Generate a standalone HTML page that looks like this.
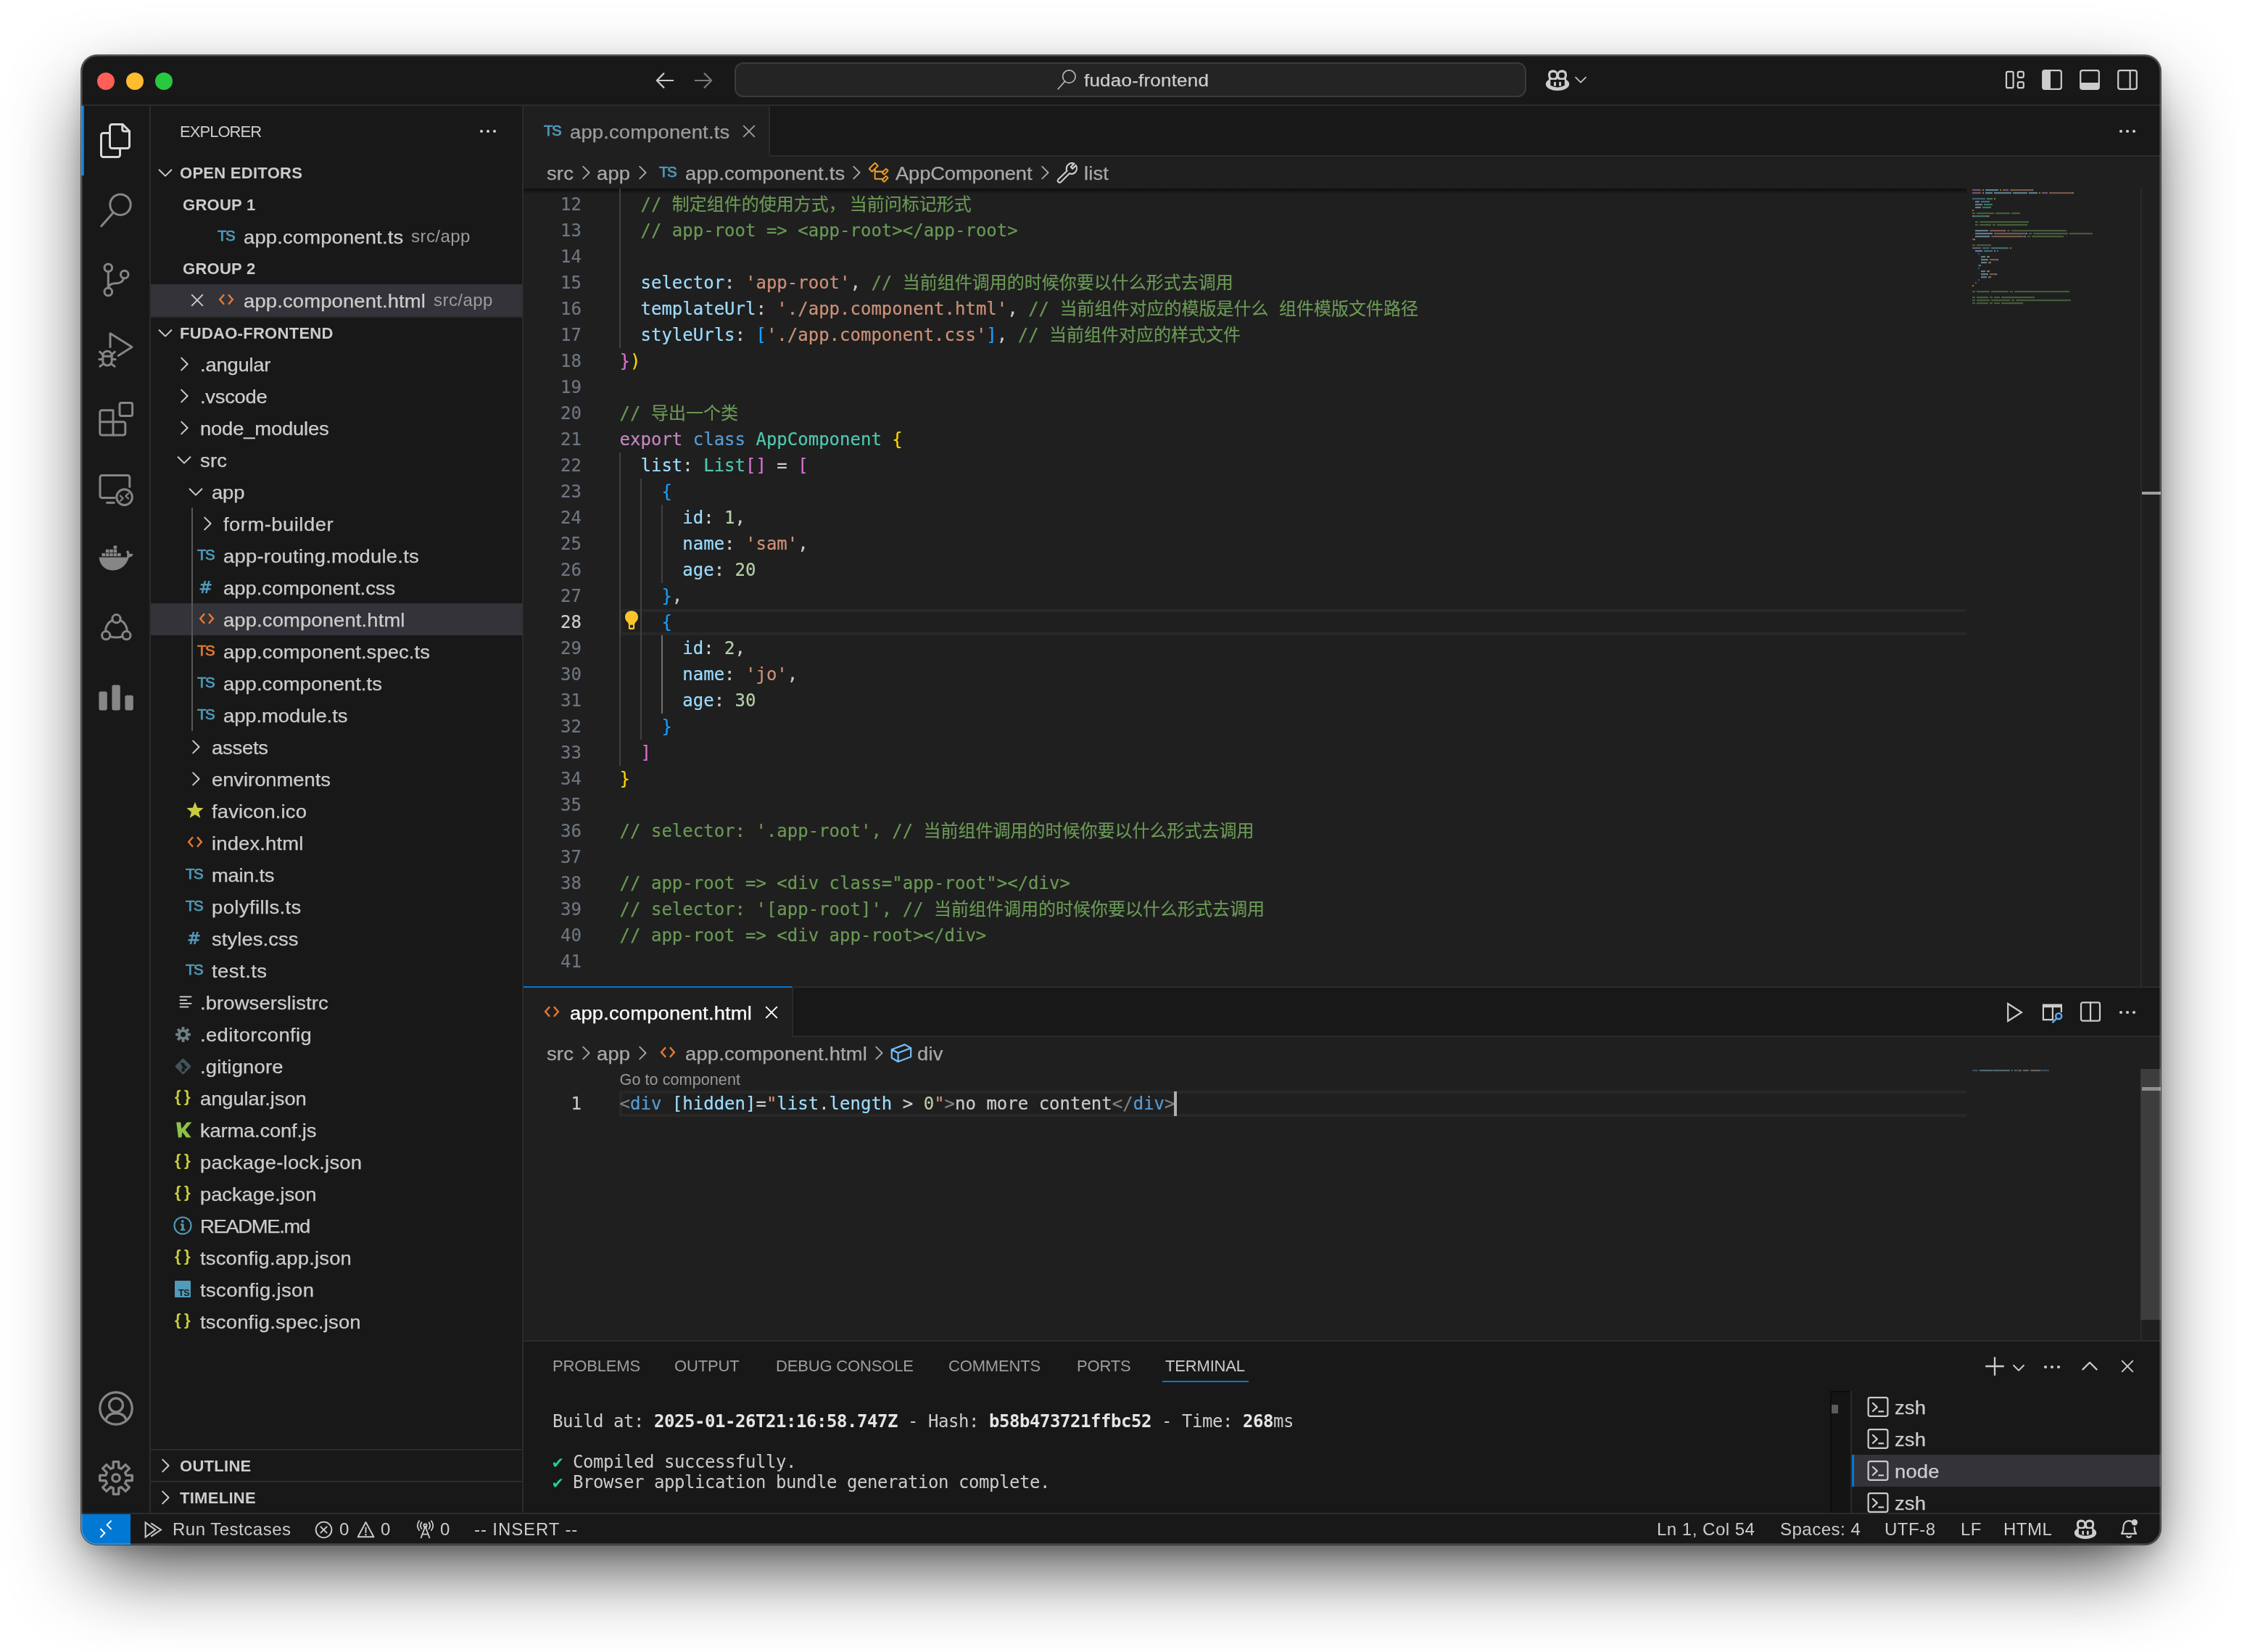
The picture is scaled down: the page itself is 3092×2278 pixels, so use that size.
<!DOCTYPE html><html lang="zh"><head><meta charset="utf-8"><title>fudao-frontend</title><style>
*{box-sizing:border-box;margin:0;padding:0}
html,body{width:3092px;height:2278px;background:#fff;overflow:hidden}
body{font-family:"Liberation Sans","Noto Sans CJK SC",sans-serif;color:#ccc;position:relative;-webkit-font-smoothing:antialiased}
.abs{position:absolute}
#win{position:absolute;left:112px;top:76px;width:2868px;height:2054px;border-radius:22px;background:#181818;overflow:hidden;}
#shadow{position:absolute;left:112px;top:76px;width:2868px;height:2054px;border-radius:22px;box-shadow:0 0 0 1px rgba(0,0,0,.62),0 43px 108px -17px rgba(0,0,0,.78),0 10px 22px rgba(0,0,0,.12)}
#rim{position:absolute;left:0;top:0;width:2868px;height:2054px;border-radius:22px;box-shadow:inset 0 0 0 1.5px rgba(255,255,255,.27);pointer-events:none;z-index:50}
.t{position:absolute;white-space:pre;line-height:44px;height:44px}
.ui{font-size:25.6px;transform:scaleX(1.07);transform-origin:0 50%;letter-spacing:.15px;line-height:46px;-webkit-text-stroke:.25px}
.b{font-weight:700}
.hl{position:absolute;background:#333339}
.ln{position:absolute;background:#2b2b2b}
.code{font-family:"DejaVu Sans Mono","Liberation Mono","Noto Sans CJK SC",monospace;font-size:24px;letter-spacing:0;white-space:pre;position:absolute;height:36px;line-height:37px;color:#ccc;-webkit-text-stroke:.2px}
.num{font-family:"DejaVu Sans Mono","Liberation Mono",monospace;font-size:24px;position:absolute;height:36px;line-height:37px;color:#6e7681;-webkit-text-stroke:.2px;text-align:right;width:81px}
.cm{color:#6a9955}.kc{color:#c586c0}.kw{color:#569cd6}.cl{color:#4ec9b0}.pr{color:#9cdcfe}.st{color:#ce9178}.nu{color:#b5cea8}
.b1{color:#ffd700}.b2{color:#da70d6}.b3{color:#179fff}.pu{color:#ccc}.tg{color:#808080}
.sp{letter-spacing:5px}.cj{font-family:"Noto Sans CJK SC",sans-serif;letter-spacing:0}
svg{position:absolute;overflow:visible}
</style></head><body>
<div id="shadow"></div>
<div id="win"><div class="abs" style="left:-112px;top:-76px;width:3092px;height:2278px;will-change:transform">
<!-- parts_title -->
<div class="abs" style="left:112px;top:76px;width:2868px;height:70px;background:#181818;"></div>
<div class="abs" style="left:112px;top:144px;width:2868px;height:2px;background:#2b2b2b;"></div>
<div class="abs" style="left:134px;top:100px;width:24px;height:24px;border-radius:50%;background:#ff5f57"></div>
<div class="abs" style="left:174px;top:100px;width:24px;height:24px;border-radius:50%;background:#febc2e"></div>
<div class="abs" style="left:214px;top:100px;width:24px;height:24px;border-radius:50%;background:#28c840"></div>
<svg style="left:901.0px;top:95.0px" width="32" height="32" viewBox="0 0 16 16" ><g fill="none" stroke="#ccc" stroke-width="1.1" stroke-linecap="round" stroke-linejoin="round"><path d="M13.6 8 H2.6 M7.2 3.2 L2.4 8 L7.2 12.8"/></g></svg>
<svg style="left:954.0px;top:95.0px" width="32" height="32" viewBox="0 0 16 16" ><g fill="none" stroke="#7a7a7a" stroke-width="1.1" stroke-linecap="round" stroke-linejoin="round"><path d="M2.4 8 H13.4 M8.8 3.2 L13.6 8 L8.8 12.8"/></g></svg>
<div class="abs" style="left:1013px;top:86px;width:1092px;height:48px;border-radius:12px;background:#242424;border:2px solid #3b3b3b"></div>
<svg style="left:1455.0px;top:95.0px" width="32" height="32" viewBox="0 0 16 16" ><g fill="none" stroke="#b8b8b8" stroke-width="0.85" stroke-linecap="round" stroke-linejoin="round"><circle cx="9.7" cy="5.3" r="4.35"/><path d="M6.8 8.6 L2.1 13.9"/></g></svg>
<div class="t ui" style="left:1495px;top:88px;font-size:24.3px;letter-spacing:.2px;color:#ccc">fudao-frontend</div>
<svg style="left:2132.0px;top:95.0px" width="32" height="32" viewBox="0 0 16 16" ><g fill="#ccc"><rect x="1.55" y=".75" width="6.65" height="6.9" rx="2.9"/><rect x="7.8" y=".75" width="6.65" height="6.9" rx="2.9"/><ellipse cx="8" cy="10.5" rx="8.1" ry="4.55"/><rect x="2" y="4" width="12" height="6"/></g><g fill="#181818"><rect x="3.15" y="2.55" width="3.85" height="3.7" rx="1.6"/><rect x="9.05" y="2.55" width="3.85" height="3.7" rx="1.6"/><path d="M3.15 7.45 H7.2 L8 6.8 L8.8 7.45 H12.9 V11.4 Q8 14 3.15 11.4z"/></g><g fill="#ccc"><rect x="5.5" y="8.9" width="1.45" height="3.1" rx=".7"/><rect x="9.05" y="8.9" width="1.45" height="3.1" rx=".7"/></g></svg>
<svg style="left:2164.0px;top:94.0px" width="32" height="32" viewBox="0 0 16 16" ><g fill="none" stroke="#ccc" stroke-width="0.8" stroke-linecap="round" stroke-linejoin="round"><path d="M4.5 6.3 L8 9.8 L11.5 6.3"/></g></svg>
<svg style="left:2763.0px;top:94.0px" width="32" height="32" viewBox="0 0 16 16" ><g fill="none" stroke="#ccc" stroke-width="1.1" stroke-linecap="round" stroke-linejoin="round"><rect x="2" y="2.4" width="4.8" height="11.2" rx="1"/><rect x="9.9" y="2.4" width="4" height="4" rx="1"/><rect x="9.9" y="9.6" width="4" height="4" rx="1"/></g></svg>
<svg style="left:2814.0px;top:94.0px" width="32" height="32" viewBox="0 0 16 16" ><g fill="none" stroke="#ccc" stroke-width="1.1" stroke-linecap="round" stroke-linejoin="round"><rect x="1.6" y="1.6" width="12.8" height="12.8" rx="1.4"/></g><path fill="#ccc" d="M3 1.6 H7 V14.4 H3 A1.4 1.4 0 0 1 1.6 13 V3 A1.4 1.4 0 0 1 3 1.6z"/></svg>
<svg style="left:2866.0px;top:94.0px" width="32" height="32" viewBox="0 0 16 16" ><g fill="none" stroke="#ccc" stroke-width="1.1" stroke-linecap="round" stroke-linejoin="round"><rect x="1.6" y="1.6" width="12.8" height="12.8" rx="1.4"/></g><path fill="#ccc" d="M1.6 10 H14.4 V13 A1.4 1.4 0 0 1 13 14.4 H3 A1.4 1.4 0 0 1 1.6 13z"/></svg>
<svg style="left:2918.0px;top:94.0px" width="32" height="32" viewBox="0 0 16 16" ><g fill="none" stroke="#ccc" stroke-width="1.1" stroke-linecap="round" stroke-linejoin="round"><rect x="1.6" y="1.6" width="12.8" height="12.8" rx="1.4"/><path d="M9.8 1.6 V14.4"/></g></svg>
<!-- parts_activity -->
<div class="abs" style="left:112px;top:146px;width:96px;height:1940px;background:#181818;"></div>
<div class="abs" style="left:206px;top:146px;width:2px;height:1940px;background:#2b2b2b;"></div>
<div class="abs" style="left:112px;top:146px;width:4px;height:96px;background:#0078d4;"></div>
<svg style="left:136.0px;top:170.0px" width="48" height="48" viewBox="0 0 24 24" ><g fill="none" stroke="#d7d7d7" stroke-width="1.5" stroke-linecap="round" stroke-linejoin="round"><path d="M9.25 .75 H16.6 L21.25 5.4 V15.75 a1.5 1.5 0 0 1 -1.5 1.5 H9.25 a1.5 1.5 0 0 1 -1.5 -1.5 V2.25 a1.5 1.5 0 0 1 1.5 -1.5z"/><path d="M16.4 .9 V4.2 a1.3 1.3 0 0 0 1.3 1.3 H21"/><path d="M7.75 6.75 H3.25 a1.5 1.5 0 0 0 -1.5 1.5 V21.75 a1.5 1.5 0 0 0 1.5 1.5 H13.25 a1.5 1.5 0 0 0 1.5 -1.5 V17.25"/></g></svg>
<svg style="left:136.0px;top:266.0px" width="48" height="48" viewBox="0 0 24 24" ><g fill="none" stroke="#868686" stroke-width="1.5" stroke-linecap="round" stroke-linejoin="round"><circle cx="15" cy="8.1" r="7.1"/><path d="M10.2 13.5 L1.9 22.9"/></g></svg>
<svg style="left:136.0px;top:362.0px" width="48" height="48" viewBox="0 0 24 24" ><g fill="none" stroke="#868686" stroke-width="1.5" stroke-linecap="round" stroke-linejoin="round"><circle cx="6.65" cy="3.6" r="2.65"/><circle cx="17.85" cy="8.25" r="2.65"/><circle cx="6.65" cy="20.2" r="2.65"/><path d="M6.65 6.3 V17.5"/><path d="M17.3 10.9 C16.6 13.6 14.6 14.4 11.5 14.4 C9 14.4 7.2 15.4 6.65 17.4"/></g></svg>
<svg style="left:136.0px;top:458.0px" width="48" height="48" viewBox="0 0 24 24" ><g fill="none" stroke="#868686" stroke-width="1.5" stroke-linecap="round" stroke-linejoin="round"><path d="M8 10.2 V.9 L23 10.2 L13.6 16.2"/><path d="M2.9 19.9 v-3.7 a3.1 3.1 0 0 1 6.2 0 v3.7 a3.1 3.1 0 0 1 -6.2 0z"/><path d="M3 16.6 h6"/><path d="M3 15.6 L.8 13.6 M9 15.6 L11.2 13.6 M2.9 18.7 H.4 M9.1 18.7 H11.6 M3.4 21.8 L.9 23.6 M8.6 21.8 L11.1 23.6"/></g></svg>
<svg style="left:136.0px;top:554.0px" width="48" height="48" viewBox="0 0 24 24" ><g fill="none" stroke="#868686" stroke-width="1.5" stroke-linecap="round" stroke-linejoin="round"><rect x="14.5" y=".75" width="8.8" height="9" rx="1.2"/><path d="M10 5.9 H2.3 a1.4 1.4 0 0 0 -1.4 1.4 V21.6 a1.4 1.4 0 0 0 1.4 1.4 H17 a1.4 1.4 0 0 0 1.4 -1.4 V15.3 a1.4 1.4 0 0 0 -1.4 -1.4 H10 V5.9z"/><path d="M10 13.9 V23 M.9 13.9 H10"/></g></svg>
<svg style="left:136.0px;top:650.0px" width="48" height="48" viewBox="0 0 24 24" ><g fill="none" stroke="#868686" stroke-width="1.5" stroke-linecap="round" stroke-linejoin="round"><path d="M11 18.3 H2.4 a1.4 1.4 0 0 1 -1.4 -1.4 V4.2 a1.4 1.4 0 0 1 1.4 -1.4 H20 a1.4 1.4 0 0 1 1.4 1.4 V10.6"/><path d="M5.8 21.6 H10.6"/><circle cx="17.8" cy="17.8" r="5.4"/></g><g fill="none" stroke="#868686" stroke-width="1.1" stroke-linecap="round" stroke-linejoin="round"><path d="M14.9 16.8 L16.9 18.6 L14.9 20.4 M20.6 15.2 L18.6 17 L20.6 18.8"/></g></svg>
<svg style="left:136.0px;top:746.0px" width="48" height="48" viewBox="0 0 24 24" ><g fill="#868686"><path d="M.3 11.2 H19.4 C19.9 9.6 19.6 8.3 19 7.4 C19.6 6.9 20 6.6 20.3 6.4 C21 7.3 21.3 8.1 21.2 9 C22.2 8.6 23.2 8.8 23.9 9.3 C23.4 10.5 22.3 11.2 20.9 11.3 C19.2 16.9 15.4 20.2 10.1 20.2 C4.3 20.2 .8 16.6 .3 11.2z"/><rect x="2.2" y="8.4" width="2.3" height="2.2"/><rect x="4.9" y="8.4" width="2.3" height="2.2"/><rect x="7.6" y="8.4" width="2.3" height="2.2"/><rect x="10.3" y="8.4" width="2.3" height="2.2"/><rect x="13" y="8.4" width="2.3" height="2.2"/><rect x="4.9" y="5.8" width="2.3" height="2.2"/><rect x="7.6" y="5.8" width="2.3" height="2.2"/><rect x="10.3" y="5.8" width="2.3" height="2.2"/><rect x="10.3" y="3.2" width="2.3" height="2.2"/></g></svg>
<svg style="left:136.0px;top:842.0px" width="48" height="48" viewBox="0 0 24 24" ><g fill="none" stroke="#868686" stroke-width="1.5" stroke-linecap="round" stroke-linejoin="round"><circle cx="12.25" cy="5.6" r="2.8"/><circle cx="5.1" cy="17.1" r="2.8"/><circle cx="19.2" cy="17.1" r="2.8"/><path d="M9.6 6.6 C6.8 8 4.9 10.8 4.7 14.2"/><path d="M14.9 6.6 C17.7 8 19.5 10.8 19.7 14.2"/><path d="M8 17.9 C10.6 18.7 13.8 18.7 16.4 17.9"/></g></svg>
<svg style="left:136.0px;top:938.0px" width="48" height="48" viewBox="0 0 24 24" ><g fill="#868686"><rect x=".2" y="7.7" width="5.7" height="13" rx="1.3"/><rect x="9.2" y="3.2" width="5.7" height="17.5" rx="1.3"/><rect x="18.2" y="10.4" width="5.7" height="10.3" rx="1.3"/></g></svg>
<svg style="left:136.0px;top:1918.0px" width="48" height="48" viewBox="0 0 24 24" ><g fill="none" stroke="#868686" stroke-width="1.6" stroke-linecap="round" stroke-linejoin="round"><circle cx="12" cy="12" r="11.1"/><circle cx="12" cy="9.8" r="4.7"/><path d="M4.9 20.4 C5.6 17 8.4 15.4 12 15.4 C15.6 15.4 18.4 17 19.1 20.4"/></g></svg>
<svg style="left:136.0px;top:2014.0px" width="48" height="48" viewBox="0 0 24 24" ><g fill="none" stroke="#868686" stroke-width="1.65" stroke-linecap="round" stroke-linejoin="round"><path d="M10.13 4.94 L10.14 0.85 L13.86 0.85 L13.87 4.94 L15.67 5.69 L18.57 2.81 L21.19 5.43 L18.31 8.33 L19.06 10.13 L23.15 10.14 L23.15 13.86 L19.06 13.87 L18.31 15.67 L21.19 18.57 L18.57 21.19 L15.67 18.31 L13.87 19.06 L13.86 23.15 L10.14 23.15 L10.13 19.06 L8.33 18.31 L5.43 21.19 L2.81 18.57 L5.69 15.67 L4.94 13.87 L0.85 13.86 L0.85 10.14 L4.94 10.13 L5.69 8.33 L2.81 5.43 L5.43 2.81 L8.33 5.69Z"/><circle cx="12" cy="12" r="2.6"/></g></svg>
<!-- parts_sidebar -->
<div class="abs" style="left:208px;top:146px;width:514px;height:1940px;background:#181818;"></div>
<div class="abs" style="left:720px;top:146px;width:2px;height:1940px;background:#2b2b2b;"></div>
<div class="t " style="left:248px;top:160px;font-size:22px;letter-spacing:-.95px;color:#ccc">EXPLORER</div>
<svg style="left:657.0px;top:165.0px" width="32" height="32" viewBox="0 0 16 16" ><g fill="#ccc"><circle cx="3.5" cy="8" r="1.05"/><circle cx="8" cy="8" r="1.05"/><circle cx="12.5" cy="8" r="1.05"/></g></svg>
<svg style="left:212.0px;top:222.0px" width="32" height="32" viewBox="0 0 16 16" ><g fill="none" stroke="#ccc" stroke-width="0.9900000000000001" stroke-linecap="round" stroke-linejoin="round"><path d="M3.8 6.1 L8 10.3 L12.2 6.1"/></g></svg>
<div class="t b" style="left:248px;top:216px;font-size:22px;letter-spacing:.28px;margin-top:1px">OPEN EDITORS</div>
<div class="t b" style="left:252px;top:260px;font-size:22px;letter-spacing:.28px;margin-top:1px">GROUP 1</div>
<div class="t" style="left:300px;top:303px;font-size:20.5px;font-weight:400;-webkit-text-stroke:.75px;letter-spacing:-1.4px;color:#519aba">TS</div>
<div class="t ui" style="left:336px;top:304px;">app.component.ts</div>
<div class="t " style="left:567px;top:304px;font-size:24px;letter-spacing:.45px;color:#9d9d9d">src/app</div>
<div class="t b" style="left:252px;top:348px;font-size:22px;letter-spacing:.28px;margin-top:1px">GROUP 2</div>
<div class="abs" style="left:208px;top:392px;width:512px;height:44px;background:#333339;"></div>
<svg style="left:256.0px;top:398.0px" width="32" height="32" viewBox="0 0 16 16" ><g fill="none" stroke="#ccc" stroke-width="0.95" stroke-linecap="butt" stroke-linejoin="round"><path d="M4.1 4.1 L11.9 11.9 M11.9 4.1 L4.1 11.9"/></g></svg>
<svg style="left:295.5px;top:397.0px" width="32" height="32" viewBox="0 0 32 32" ><g fill="none" stroke="#e37933" stroke-width="2.5" stroke-linecap="butt" stroke-linejoin="miter"><path d="M13 9.2 L7.2 16 L13 22.8 M19 9.2 L24.8 16 L19 22.8"/></g></svg>
<div class="t ui" style="left:336px;top:392px;">app.component.html</div>
<div class="t " style="left:598px;top:392px;font-size:24px;letter-spacing:.45px;color:#9d9d9d">src/app</div>
<div class="abs" style="left:208px;top:436px;width:512px;height:2px;background:#2b2b2b;"></div>
<svg style="left:212.0px;top:443.0px" width="32" height="32" viewBox="0 0 16 16" ><g fill="none" stroke="#ccc" stroke-width="0.9900000000000001" stroke-linecap="round" stroke-linejoin="round"><path d="M3.8 6.1 L8 10.3 L12.2 6.1"/></g></svg>
<div class="t b" style="left:248px;top:437px;font-size:22px;letter-spacing:.28px;margin-top:1px">FUDAO-FRONTEND</div>
<svg style="left:238.0px;top:486.0px" width="32" height="32" viewBox="0 0 16 16" ><g fill="none" stroke="#ccc" stroke-width="0.9900000000000001" stroke-linecap="round" stroke-linejoin="round"><path d="M6.1 3.8 L10.3 8 L6.1 12.2"/></g></svg>
<div class="t ui" style="left:276px;top:480px;letter-spacing:-0.207px">.angular</div>
<svg style="left:238.0px;top:530.0px" width="32" height="32" viewBox="0 0 16 16" ><g fill="none" stroke="#ccc" stroke-width="0.9900000000000001" stroke-linecap="round" stroke-linejoin="round"><path d="M6.1 3.8 L10.3 8 L6.1 12.2"/></g></svg>
<div class="t ui" style="left:276px;top:524px;letter-spacing:-0.25px">.vscode</div>
<svg style="left:238.0px;top:574.0px" width="32" height="32" viewBox="0 0 16 16" ><g fill="none" stroke="#ccc" stroke-width="0.9900000000000001" stroke-linecap="round" stroke-linejoin="round"><path d="M6.1 3.8 L10.3 8 L6.1 12.2"/></g></svg>
<div class="t ui" style="left:276px;top:568px;letter-spacing:-0.168px">node_modules</div>
<svg style="left:238.0px;top:618.0px" width="32" height="32" viewBox="0 0 16 16" ><g fill="none" stroke="#ccc" stroke-width="0.9900000000000001" stroke-linecap="round" stroke-linejoin="round"><path d="M3.8 6.1 L8 10.3 L12.2 6.1"/></g></svg>
<div class="t ui" style="left:276px;top:612px;letter-spacing:0.2px">src</div>
<svg style="left:254.0px;top:662.0px" width="32" height="32" viewBox="0 0 16 16" ><g fill="none" stroke="#ccc" stroke-width="0.9900000000000001" stroke-linecap="round" stroke-linejoin="round"><path d="M3.8 6.1 L8 10.3 L12.2 6.1"/></g></svg>
<div class="t ui" style="left:292px;top:656px;letter-spacing:-0.15px">app</div>
<svg style="left:270.0px;top:706.0px" width="32" height="32" viewBox="0 0 16 16" ><g fill="none" stroke="#ccc" stroke-width="0.9900000000000001" stroke-linecap="round" stroke-linejoin="round"><path d="M6.1 3.8 L10.3 8 L6.1 12.2"/></g></svg>
<div class="t ui" style="left:308px;top:700px;letter-spacing:0.459px">form-builder</div>
<div class="t" style="left:272px;top:743px;font-size:20.5px;font-weight:400;-webkit-text-stroke:.75px;letter-spacing:-1.4px;color:#519aba">TS</div>
<div class="t ui" style="left:308px;top:744px;letter-spacing:0.225px">app-routing.module.ts</div>
<div class="t" style="left:274px;top:788px;font-family:'DejaVu Sans',sans-serif;font-size:23px;font-weight:700;color:#519aba">#</div>
<div class="t ui" style="left:308px;top:788px;letter-spacing:-0.014px">app.component.css</div>
<div class="abs" style="left:208px;top:832px;width:512px;height:44px;background:#333339;"></div>
<svg style="left:268.5px;top:837.0px" width="32" height="32" viewBox="0 0 32 32" ><g fill="none" stroke="#e37933" stroke-width="2.5" stroke-linecap="butt" stroke-linejoin="miter"><path d="M13 9.2 L7.2 16 L13 22.8 M19 9.2 L24.8 16 L19 22.8"/></g></svg>
<div class="t ui" style="left:308px;top:832px;letter-spacing:0.127px">app.component.html</div>
<div class="t" style="left:272px;top:875px;font-size:20.5px;font-weight:400;-webkit-text-stroke:.75px;letter-spacing:-1.4px;color:#e37933">TS</div>
<div class="t ui" style="left:308px;top:876px;letter-spacing:0.08px">app.component.spec.ts</div>
<div class="t" style="left:272px;top:919px;font-size:20.5px;font-weight:400;-webkit-text-stroke:.75px;letter-spacing:-1.4px;color:#519aba">TS</div>
<div class="t ui" style="left:308px;top:920px;letter-spacing:0.076px">app.component.ts</div>
<div class="t" style="left:272px;top:963px;font-size:20.5px;font-weight:400;-webkit-text-stroke:.75px;letter-spacing:-1.4px;color:#519aba">TS</div>
<div class="t ui" style="left:308px;top:964px;letter-spacing:-0.05px">app.module.ts</div>
<svg style="left:254.0px;top:1014.0px" width="32" height="32" viewBox="0 0 16 16" ><g fill="none" stroke="#ccc" stroke-width="0.9900000000000001" stroke-linecap="round" stroke-linejoin="round"><path d="M6.1 3.8 L10.3 8 L6.1 12.2"/></g></svg>
<div class="t ui" style="left:292px;top:1008px;letter-spacing:-0.21px">assets</div>
<svg style="left:254.0px;top:1058.0px" width="32" height="32" viewBox="0 0 16 16" ><g fill="none" stroke="#ccc" stroke-width="0.9900000000000001" stroke-linecap="round" stroke-linejoin="round"><path d="M6.1 3.8 L10.3 8 L6.1 12.2"/></g></svg>
<div class="t ui" style="left:292px;top:1052px;letter-spacing:-0.041px">environments</div>
<svg style="left:256.0px;top:1104.0px" width="26" height="26" viewBox="0 0 16 16" ><polygon fill="#cbcb41" points="8.00,1.00 9.94,5.93 15.23,6.25 11.14,9.62 12.47,14.75 8.00,11.90 3.53,14.75 4.86,9.62 0.77,6.25 6.06,5.93"/></svg>
<div class="t ui" style="left:292px;top:1096px;letter-spacing:0.14px">favicon.ico</div>
<svg style="left:252.5px;top:1145.0px" width="32" height="32" viewBox="0 0 32 32" ><g fill="none" stroke="#e37933" stroke-width="2.5" stroke-linecap="butt" stroke-linejoin="miter"><path d="M13 9.2 L7.2 16 L13 22.8 M19 9.2 L24.8 16 L19 22.8"/></g></svg>
<div class="t ui" style="left:292px;top:1140px;letter-spacing:0.15px">index.html</div>
<div class="t" style="left:256px;top:1183px;font-size:20.5px;font-weight:400;-webkit-text-stroke:.75px;letter-spacing:-1.4px;color:#519aba">TS</div>
<div class="t ui" style="left:292px;top:1184px;letter-spacing:-0.267px">main.ts</div>
<div class="t" style="left:256px;top:1227px;font-size:20.5px;font-weight:400;-webkit-text-stroke:.75px;letter-spacing:-1.4px;color:#519aba">TS</div>
<div class="t ui" style="left:292px;top:1228px;letter-spacing:0.386px">polyfills.ts</div>
<div class="t" style="left:258px;top:1272px;font-family:'DejaVu Sans',sans-serif;font-size:23px;font-weight:700;color:#519aba">#</div>
<div class="t ui" style="left:292px;top:1272px;letter-spacing:0.072px">styles.css</div>
<div class="t" style="left:256px;top:1315px;font-size:20.5px;font-weight:400;-webkit-text-stroke:.75px;letter-spacing:-1.4px;color:#519aba">TS</div>
<div class="t ui" style="left:292px;top:1316px;letter-spacing:0.466px">test.ts</div>
<svg style="left:245.0px;top:1370.0px" width="22" height="22" viewBox="0 0 16 16" ><g fill="#d4d7d6"><rect x="2" y="2.6" width="12" height="1.3"/><rect x="2" y="6" width="7.4" height="1.3"/><rect x="2" y="9.4" width="12" height="1.3"/><rect x="2" y="12.8" width="9" height="1.3"/></g></svg>
<div class="t ui" style="left:276px;top:1360px;letter-spacing:0.114px">.browserslistrc</div>
<svg style="left:239.5px;top:1413.5px" width="25" height="25" viewBox="0 0 16 16" ><polygon fill="#6d8086" points="12.39,6.64 14.70,6.85 14.70,9.15 12.39,9.36 12.07,10.15 13.55,11.93 11.93,13.55 10.15,12.07 9.36,12.39 9.15,14.70 6.85,14.70 6.64,12.39 5.85,12.07 4.07,13.55 2.45,11.93 3.93,10.15 3.61,9.36 1.30,9.15 1.30,6.85 3.61,6.64 3.93,5.85 2.45,4.07 4.07,2.45 5.85,3.93 6.64,3.61 6.85,1.30 9.15,1.30 9.36,3.61 10.15,3.93 11.93,2.45 13.55,4.07 12.07,5.85"/><circle cx="8" cy="8" r="2.3" fill="#181818"/></svg>
<div class="t ui" style="left:276px;top:1404px;letter-spacing:0.358px">.editorconfig</div>
<svg style="left:238.5px;top:1456.5px" width="27" height="27" viewBox="0 0 16 16" ><rect x="3.2" y="3.2" width="9.6" height="9.6" rx="1" transform="rotate(45 8 8)" fill="#41535b"/><g stroke="#181818" stroke-width="1" fill="#181818"><path d="M6.2 5 L9.6 8.4 M8 6.8 V11" fill="none"/><circle cx="8" cy="11" r=".9"/><circle cx="9.8" cy="8.6" r=".9"/><circle cx="8" cy="6.6" r=".9"/></g></svg>
<div class="t ui" style="left:276px;top:1448px;letter-spacing:0.195px">.gitignore</div>
<div class="t" style="left:241px;top:1490px;font-size:22px;font-weight:700;letter-spacing:4.5px;color:#cbcb41">{}</div>
<div class="t ui" style="left:276px;top:1492px;letter-spacing:-0.077px">angular.json</div>
<svg style="left:240.0px;top:1545.0px" width="26" height="26" viewBox="0 0 16 16" ><path fill="#8dc149" d="M2 1.5 H5.6 L6.4 7.2 L11 1.5 H15 L9.6 8 L14.6 14.5 H10.4 L7 9.8 L6.4 14.5 H3.6 Z"/></svg>
<div class="t ui" style="left:276px;top:1536px;letter-spacing:-0.191px">karma.conf.js</div>
<div class="t" style="left:241px;top:1578px;font-size:22px;font-weight:700;letter-spacing:4.5px;color:#cbcb41">{}</div>
<div class="t ui" style="left:276px;top:1580px;letter-spacing:0.224px">package-lock.json</div>
<div class="t" style="left:241px;top:1622px;font-size:22px;font-weight:700;letter-spacing:4.5px;color:#cbcb41">{}</div>
<div class="t ui" style="left:276px;top:1624px;letter-spacing:-0.077px">package.json</div>
<svg style="left:238.0px;top:1676.0px" width="28" height="28" viewBox="0 0 16 16" ><g fill="none" stroke="#519aba" stroke-width="1.2" stroke-linecap="round" stroke-linejoin="round"><circle cx="8" cy="8" r="6.6"/></g><g fill="#519aba"><rect x="7.1" y="6.6" width="1.8" height="5"/><rect x="6.2" y="6.6" width="2" height="1.1"/><rect x="6.2" y="10.8" width="3.8" height="1.1"/><circle cx="7.9" cy="4.6" r="1.05"/></g></svg>
<div class="t ui" style="left:276px;top:1668px;letter-spacing:-1.236px">README.md</div>
<div class="t" style="left:241px;top:1710px;font-size:22px;font-weight:700;letter-spacing:4.5px;color:#cbcb41">{}</div>
<div class="t ui" style="left:276px;top:1712px;letter-spacing:0.194px">tsconfig.app.json</div>
<div class="abs" style="left:241px;top:1766px;width:22px;height:23px;background:#519aba;border-radius:1px"></div><div class="t" style="left:246px;top:1761px;font-size:12.5px;font-weight:700;color:#181818;letter-spacing:-.3px">TS</div>
<div class="t ui" style="left:276px;top:1756px;letter-spacing:0.367px">tsconfig.json</div>
<div class="t" style="left:241px;top:1798px;font-size:22px;font-weight:700;letter-spacing:4.5px;color:#cbcb41">{}</div>
<div class="t ui" style="left:276px;top:1800px;letter-spacing:0.214px">tsconfig.spec.json</div>
<div class="abs" style="left:264px;top:700px;width:2px;height:308px;background:#585858;"></div>
<div class="abs" style="left:208px;top:1998px;width:512px;height:2px;background:#2b2b2b;"></div>
<svg style="left:212.0px;top:2005.0px" width="32" height="32" viewBox="0 0 16 16" ><g fill="none" stroke="#ccc" stroke-width="0.9900000000000001" stroke-linecap="round" stroke-linejoin="round"><path d="M6.1 3.8 L10.3 8 L6.1 12.2"/></g></svg>
<div class="t b" style="left:248px;top:1999px;font-size:22px;letter-spacing:.28px;margin-top:1px">OUTLINE</div>
<div class="abs" style="left:208px;top:2042px;width:512px;height:2px;background:#2b2b2b;"></div>
<svg style="left:212.0px;top:2049.0px" width="32" height="32" viewBox="0 0 16 16" ><g fill="none" stroke="#ccc" stroke-width="0.9900000000000001" stroke-linecap="round" stroke-linejoin="round"><path d="M6.1 3.8 L10.3 8 L6.1 12.2"/></g></svg>
<div class="t b" style="left:248px;top:2043px;font-size:22px;letter-spacing:.28px;margin-top:1px">TIMELINE</div>
<!-- parts_editor1 -->
<div class="abs" style="left:722px;top:146px;width:2258px;height:1214px;background:#1f1f1f;"></div>
<div class="abs" style="left:722px;top:146px;width:2258px;height:70px;background:#181818;"></div>
<div class="abs" style="left:722px;top:214px;width:2258px;height:2px;background:#2b2b2b;"></div>
<div class="abs" style="left:722px;top:146px;width:340px;height:70px;background:#1f1f1f;"></div>
<div class="abs" style="left:1060px;top:146px;width:2px;height:70px;background:#2b2b2b;"></div>
<div class="t" style="left:750px;top:158px;font-size:20.5px;font-weight:400;-webkit-text-stroke:.75px;letter-spacing:-1.4px;color:#519aba">TS</div>
<div class="t ui" style="left:786px;top:159px;color:#9d9d9d">app.component.ts</div>
<svg style="left:1017.0px;top:165.0px" width="32" height="32" viewBox="0 0 16 16" ><g fill="none" stroke="#9d9d9d" stroke-width="0.95" stroke-linecap="butt" stroke-linejoin="round"><path d="M4.1 4.1 L11.9 11.9 M11.9 4.1 L4.1 11.9"/></g></svg>
<svg style="left:2918.0px;top:165.0px" width="32" height="32" viewBox="0 0 16 16" ><g fill="#ccc"><circle cx="3.5" cy="8" r="1.05"/><circle cx="8" cy="8" r="1.05"/><circle cx="12.5" cy="8" r="1.05"/></g></svg>
<div class="t ui" style="left:754px;top:216px;color:#a9a9a9">src</div>
<svg style="left:792.0px;top:222.0px" width="32" height="32" viewBox="0 0 16 16" ><g fill="none" stroke="#a9a9a9" stroke-width="0.9" stroke-linecap="round" stroke-linejoin="round"><path d="M6.1 3.8 L10.3 8 L6.1 12.2"/></g></svg>
<div class="t ui" style="left:823px;top:216px;color:#a9a9a9">app</div>
<svg style="left:870.0px;top:222.0px" width="32" height="32" viewBox="0 0 16 16" ><g fill="none" stroke="#a9a9a9" stroke-width="0.9" stroke-linecap="round" stroke-linejoin="round"><path d="M6.1 3.8 L10.3 8 L6.1 12.2"/></g></svg>
<div class="t" style="left:909px;top:215px;font-size:20.5px;font-weight:400;-webkit-text-stroke:.75px;letter-spacing:-1.4px;color:#519aba">TS</div>
<div class="t ui" style="left:945px;top:216px;color:#a9a9a9">app.component.ts</div>
<svg style="left:1165.0px;top:222.0px" width="32" height="32" viewBox="0 0 16 16" ><g fill="none" stroke="#a9a9a9" stroke-width="0.9" stroke-linecap="round" stroke-linejoin="round"><path d="M6.1 3.8 L10.3 8 L6.1 12.2"/></g></svg>
<svg style="left:1196.0px;top:222.0px" width="32" height="32" viewBox="0 0 16 16" ><path fill="#ee9d28" d="M11.34 9.71h.71l2.67-2.67v-.71L13.38 5h-.7l-1.82 1.81h-5V5.56l1.86-1.85V3l-2-2H5L1 5v.71l2 2h.71l1.14-1.15v5.79l.5.5H10v.52l1.33 1.34h.71l2.67-2.67v-.71L13.37 10h-.7l-1.86 1.85h-5v-4H10v.48l1.34 1.38zm1.69-3.65l.63.63-2 2-.63-.63 2-2zm0 5l.63.63-2 2-.63-.63 2-2zM3.35 6.65l-1.29-1.3 3.29-3.29 1.3 1.29-3.3 3.3z"/></svg>
<div class="t ui" style="left:1235px;top:216px;color:#a9a9a9;letter-spacing:-.15px">AppComponent</div>
<svg style="left:1425.0px;top:222.0px" width="32" height="32" viewBox="0 0 16 16" ><g fill="none" stroke="#a9a9a9" stroke-width="0.9" stroke-linecap="round" stroke-linejoin="round"><path d="M6.1 3.8 L10.3 8 L6.1 12.2"/></g></svg>
<svg style="left:1456.0px;top:222.0px" width="32" height="32" viewBox="0 0 16 16" ><g fill="none" stroke="#ccc" stroke-width="1.1" stroke-linecap="round" stroke-linejoin="round"><path d="M13.9 3 L11.6 5.3 L10.4 4.1 L12.7 1.8 C11.2 1.2 9.4 1.6 8.3 2.9 C7.3 4.1 7.2 5.6 7.7 6.9 L1.8 12.6 C1.2 13.2 1.2 14 1.8 14.5 C2.4 15 3.1 15 3.7 14.4 L9.4 8.6 C10.8 9.1 12.3 8.9 13.4 7.8 C14.6 6.6 14.8 4.6 13.9 3z"/></g></svg>
<div class="t ui" style="left:1495px;top:216px;color:#a9a9a9">list</div>
<div class="abs" style="left:722px;top:260px;width:1990px;height:8px;background:linear-gradient(#000 0,rgba(0,0,0,0) 100%);opacity:.55"></div>
<div class="abs" style="left:854px;top:840px;width:1858px;height:36px;border:4px solid #282828;border-right:0"></div>
<div class="abs" style="left:854px;top:260px;width:2px;height:220px;background:#404040;"></div>
<div class="abs" style="left:854px;top:624px;width:2px;height:432px;background:#404040;"></div>
<div class="abs" style="left:883px;top:660px;width:2px;height:360px;background:#404040;"></div>
<div class="abs" style="left:912px;top:696px;width:2px;height:108px;background:#404040;"></div>
<div class="abs" style="left:912px;top:876px;width:2px;height:108px;background:#707070;"></div>
<div class="num" style="left:721px;top:264px;">12</div>
<div class="code" style="left:854.6px;top:264px"><span class="pu">  </span><span class="cm">// 制定组件的使用方式</span><span class="cm sp">，</span><span class="cm">当前问标记形式</span></div>
<div class="num" style="left:721px;top:300px;">13</div>
<div class="code" style="left:854.6px;top:300px"><span class="pu">  </span><span class="cm">// app-root =&gt; &lt;app-root&gt;&lt;/app-root&gt;</span></div>
<div class="num" style="left:721px;top:336px;">14</div>
<div class="num" style="left:721px;top:372px;">15</div>
<div class="code" style="left:854.6px;top:372px"><span class="pu">  </span><span class="pr">selector</span><span class="pu">: </span><span class="st">'app-root'</span><span class="pu">, </span><span class="cm">// 当前组件调用的时候你要以什么形式去调用</span></div>
<div class="num" style="left:721px;top:408px;">16</div>
<div class="code" style="left:854.6px;top:408px"><span class="pu">  </span><span class="pr">templateUrl</span><span class="pu">: </span><span class="st">'./app.component.html'</span><span class="pu">, </span><span class="cm">// 当前组件对应的模版是什么 组件模版文件路径</span></div>
<div class="num" style="left:721px;top:444px;">17</div>
<div class="code" style="left:854.6px;top:444px"><span class="pu">  </span><span class="pr">styleUrls</span><span class="pu">: </span><span class="b3">[</span><span class="st">'./app.component.css'</span><span class="b3">]</span><span class="pu">, </span><span class="cm">// 当前组件对应的样式文件</span></div>
<div class="num" style="left:721px;top:480px;">18</div>
<div class="code" style="left:854.6px;top:480px"><span class="b2">}</span><span class="b1">)</span></div>
<div class="num" style="left:721px;top:516px;">19</div>
<div class="num" style="left:721px;top:552px;">20</div>
<div class="code" style="left:854.6px;top:552px"><span class="cm">// 导出一个类</span></div>
<div class="num" style="left:721px;top:588px;">21</div>
<div class="code" style="left:854.6px;top:588px"><span class="kc">export</span><span class="pu"> </span><span class="kw">class</span><span class="pu"> </span><span class="cl">AppComponent</span><span class="pu"> </span><span class="b1">{</span></div>
<div class="num" style="left:721px;top:624px;">22</div>
<div class="code" style="left:854.6px;top:624px"><span class="pu">  </span><span class="pr">list</span><span class="pu">: </span><span class="cl">List</span><span class="b2">[]</span><span class="pu"> = </span><span class="b2">[</span></div>
<div class="num" style="left:721px;top:660px;">23</div>
<div class="code" style="left:854.6px;top:660px"><span class="pu">    </span><span class="b3">{</span></div>
<div class="num" style="left:721px;top:696px;">24</div>
<div class="code" style="left:854.6px;top:696px"><span class="pu">      </span><span class="pr">id</span><span class="pu">: </span><span class="nu">1</span><span class="pu">,</span></div>
<div class="num" style="left:721px;top:732px;">25</div>
<div class="code" style="left:854.6px;top:732px"><span class="pu">      </span><span class="pr">name</span><span class="pu">: </span><span class="st">'sam'</span><span class="pu">,</span></div>
<div class="num" style="left:721px;top:768px;">26</div>
<div class="code" style="left:854.6px;top:768px"><span class="pu">      </span><span class="pr">age</span><span class="pu">: </span><span class="nu">20</span></div>
<div class="num" style="left:721px;top:804px;">27</div>
<div class="code" style="left:854.6px;top:804px"><span class="pu">    </span><span class="b3">}</span><span class="pu">,</span></div>
<div class="num" style="left:721px;top:840px;color:#ccc;">28</div>
<div class="code" style="left:854.6px;top:840px"><span class="pu">    </span><span class="b3">{</span></div>
<div class="num" style="left:721px;top:876px;">29</div>
<div class="code" style="left:854.6px;top:876px"><span class="pu">      </span><span class="pr">id</span><span class="pu">: </span><span class="nu">2</span><span class="pu">,</span></div>
<div class="num" style="left:721px;top:912px;">30</div>
<div class="code" style="left:854.6px;top:912px"><span class="pu">      </span><span class="pr">name</span><span class="pu">: </span><span class="st">'jo'</span><span class="pu">,</span></div>
<div class="num" style="left:721px;top:948px;">31</div>
<div class="code" style="left:854.6px;top:948px"><span class="pu">      </span><span class="pr">age</span><span class="pu">: </span><span class="nu">30</span></div>
<div class="num" style="left:721px;top:984px;">32</div>
<div class="code" style="left:854.6px;top:984px"><span class="pu">    </span><span class="b3">}</span></div>
<div class="num" style="left:721px;top:1020px;">33</div>
<div class="code" style="left:854.6px;top:1020px"><span class="pu">  </span><span class="b2">]</span></div>
<div class="num" style="left:721px;top:1056px;">34</div>
<div class="code" style="left:854.6px;top:1056px"><span class="b1">}</span></div>
<div class="num" style="left:721px;top:1092px;">35</div>
<div class="num" style="left:721px;top:1128px;">36</div>
<div class="code" style="left:854.6px;top:1128px"><span class="cm">// selector: '.app-root', // 当前组件调用的时候你要以什么形式去调用</span></div>
<div class="num" style="left:721px;top:1164px;">37</div>
<div class="num" style="left:721px;top:1200px;">38</div>
<div class="code" style="left:854.6px;top:1200px"><span class="cm">// app-root =&gt; &lt;div class="app-root"&gt;&lt;/div&gt;</span></div>
<div class="num" style="left:721px;top:1236px;">39</div>
<div class="code" style="left:854.6px;top:1236px"><span class="cm">// selector: '[app-root]', // 当前组件调用的时候你要以什么形式去调用</span></div>
<div class="num" style="left:721px;top:1272px;">40</div>
<div class="code" style="left:854.6px;top:1272px"><span class="cm">// app-root =&gt; &lt;div app-root&gt;&lt;/div&gt;</span></div>
<div class="num" style="left:721px;top:1308px;">41</div>
<svg style="left:856.0px;top:840.0px" width="30" height="30" viewBox="0 0 16 16" ><path fill="#fcc42c" d="M8 1.2 C5.1 1.2 3.2 3.3 3.2 5.8 C3.2 7.4 4 8.5 4.9 9.5 C5.5 10.2 5.8 10.8 5.8 11.6 V14 C5.8 14.5 6.2 14.9 6.7 14.9 H9.3 C9.8 14.9 10.2 14.5 10.2 14 V11.6 C10.2 10.8 10.5 10.2 11.1 9.5 C12 8.5 12.8 7.4 12.8 5.8 C12.8 3.3 10.9 1.2 8 1.2z"/><rect x="6.9" y="11.6" width="2.2" height="2" fill="#1f1f1f"/></svg>
<svg style="left:0;top:0" width="3092" height="2278" opacity="0.5"><rect x="2720.0" y="261.0" width="12.0" height="2.2" fill="#c586c0"/><rect x="2734.0" y="261.0" width="2.0" height="2.2" fill="#ffd700"/><rect x="2738.0" y="261.0" width="18.0" height="2.2" fill="#9cdcfe"/><rect x="2758.0" y="261.0" width="2.0" height="2.2" fill="#ffd700"/><rect x="2762.0" y="261.0" width="8.0" height="2.2" fill="#c586c0"/><rect x="2772.0" y="261.0" width="30.0" height="2.2" fill="#ce9178"/><rect x="2802.0" y="261.0" width="2.0" height="2.2" fill="#cccccc"/><rect x="2720.0" y="265.0" width="12.0" height="2.2" fill="#c586c0"/><rect x="2734.0" y="265.0" width="2.0" height="2.2" fill="#ffd700"/><rect x="2738.0" y="265.0" width="8.0" height="2.2" fill="#9cdcfe"/><rect x="2746.0" y="265.0" width="2.0" height="2.2" fill="#cccccc"/><rect x="2750.0" y="265.0" width="22.0" height="2.2" fill="#9cdcfe"/><rect x="2772.0" y="265.0" width="2.0" height="2.2" fill="#cccccc"/><rect x="2776.0" y="265.0" width="18.0" height="2.2" fill="#9cdcfe"/><rect x="2794.0" y="265.0" width="2.0" height="2.2" fill="#cccccc"/><rect x="2798.0" y="265.0" width="12.0" height="2.2" fill="#9cdcfe"/><rect x="2812.0" y="265.0" width="2.0" height="2.2" fill="#ffd700"/><rect x="2816.0" y="265.0" width="8.0" height="2.2" fill="#c586c0"/><rect x="2826.0" y="265.0" width="32.0" height="2.2" fill="#ce9178"/><rect x="2858.0" y="265.0" width="2.0" height="2.2" fill="#cccccc"/><rect x="2720.0" y="273.0" width="18.0" height="2.2" fill="#569cd6"/><rect x="2740.0" y="273.0" width="8.0" height="2.2" fill="#4ec9b0"/><rect x="2750.0" y="273.0" width="2.0" height="2.2" fill="#ffd700"/><rect x="2724.0" y="277.0" width="4.0" height="2.2" fill="#9cdcfe"/><rect x="2728.0" y="277.0" width="2.0" height="2.2" fill="#cccccc"/><rect x="2732.0" y="277.0" width="12.0" height="2.2" fill="#4ec9b0"/><rect x="2724.0" y="281.0" width="8.0" height="2.2" fill="#9cdcfe"/><rect x="2732.0" y="281.0" width="2.0" height="2.2" fill="#cccccc"/><rect x="2736.0" y="281.0" width="12.0" height="2.2" fill="#4ec9b0"/><rect x="2724.0" y="285.0" width="6.0" height="2.2" fill="#9cdcfe"/><rect x="2730.0" y="285.0" width="2.0" height="2.2" fill="#cccccc"/><rect x="2734.0" y="285.0" width="12.0" height="2.2" fill="#4ec9b0"/><rect x="2720.0" y="289.0" width="2.0" height="2.2" fill="#ffd700"/><rect x="2720.0" y="293.0" width="4.0" height="2.2" fill="#6a9955"/><rect x="2726.0" y="293.0" width="24.0" height="2.2" fill="#6a9955"/><rect x="2752.0" y="293.0" width="20.0" height="2.2" fill="#6a9955"/><rect x="2774.0" y="293.0" width="12.0" height="2.2" fill="#6a9955"/><rect x="2720.0" y="297.0" width="2.0" height="2.2" fill="#cccccc"/><rect x="2722.0" y="297.0" width="18.0" height="2.2" fill="#4ec9b0"/><rect x="2740.0" y="297.0" width="2.0" height="2.2" fill="#ffd700"/><rect x="2742.0" y="297.0" width="2.0" height="2.2" fill="#da70d6"/><rect x="2724.0" y="305.0" width="4.0" height="2.2" fill="#6a9955"/><rect x="2730.0" y="305.0" width="36.0" height="2.2" fill="#6a9955"/><rect x="2766.0" y="305.0" width="4.0" height="2.2" fill="#6a9955"/><rect x="2770.0" y="305.0" width="28.0" height="2.2" fill="#6a9955"/><rect x="2724.0" y="309.0" width="4.0" height="2.2" fill="#6a9955"/><rect x="2730.0" y="309.0" width="16.0" height="2.2" fill="#6a9955"/><rect x="2748.0" y="309.0" width="4.0" height="2.2" fill="#6a9955"/><rect x="2754.0" y="309.0" width="42.0" height="2.2" fill="#6a9955"/><rect x="2724.0" y="317.0" width="16.0" height="2.2" fill="#9cdcfe"/><rect x="2740.0" y="317.0" width="2.0" height="2.2" fill="#cccccc"/><rect x="2744.0" y="317.0" width="20.0" height="2.2" fill="#ce9178"/><rect x="2764.0" y="317.0" width="2.0" height="2.2" fill="#cccccc"/><rect x="2768.0" y="317.0" width="4.0" height="2.2" fill="#6a9955"/><rect x="2774.0" y="317.0" width="76.0" height="2.2" fill="#6a9955"/><rect x="2724.0" y="321.0" width="22.0" height="2.2" fill="#9cdcfe"/><rect x="2746.0" y="321.0" width="2.0" height="2.2" fill="#cccccc"/><rect x="2750.0" y="321.0" width="44.0" height="2.2" fill="#ce9178"/><rect x="2794.0" y="321.0" width="2.0" height="2.2" fill="#cccccc"/><rect x="2798.0" y="321.0" width="4.0" height="2.2" fill="#6a9955"/><rect x="2804.0" y="321.0" width="48.0" height="2.2" fill="#6a9955"/><rect x="2854.0" y="321.0" width="32.0" height="2.2" fill="#6a9955"/><rect x="2724.0" y="325.0" width="18.0" height="2.2" fill="#9cdcfe"/><rect x="2742.0" y="325.0" width="2.0" height="2.2" fill="#cccccc"/><rect x="2746.0" y="325.0" width="2.0" height="2.2" fill="#179fff"/><rect x="2748.0" y="325.0" width="42.0" height="2.2" fill="#ce9178"/><rect x="2790.0" y="325.0" width="2.0" height="2.2" fill="#179fff"/><rect x="2792.0" y="325.0" width="2.0" height="2.2" fill="#cccccc"/><rect x="2796.0" y="325.0" width="4.0" height="2.2" fill="#6a9955"/><rect x="2802.0" y="325.0" width="44.0" height="2.2" fill="#6a9955"/><rect x="2720.0" y="329.0" width="2.0" height="2.2" fill="#da70d6"/><rect x="2722.0" y="329.0" width="2.0" height="2.2" fill="#ffd700"/><rect x="2720.0" y="337.0" width="4.0" height="2.2" fill="#6a9955"/><rect x="2726.0" y="337.0" width="20.0" height="2.2" fill="#6a9955"/><rect x="2720.0" y="341.0" width="12.0" height="2.2" fill="#c586c0"/><rect x="2734.0" y="341.0" width="10.0" height="2.2" fill="#569cd6"/><rect x="2746.0" y="341.0" width="24.0" height="2.2" fill="#4ec9b0"/><rect x="2772.0" y="341.0" width="2.0" height="2.2" fill="#ffd700"/><rect x="2724.0" y="345.0" width="8.0" height="2.2" fill="#9cdcfe"/><rect x="2732.0" y="345.0" width="2.0" height="2.2" fill="#cccccc"/><rect x="2736.0" y="345.0" width="8.0" height="2.2" fill="#4ec9b0"/><rect x="2744.0" y="345.0" width="4.0" height="2.2" fill="#da70d6"/><rect x="2750.0" y="345.0" width="2.0" height="2.2" fill="#cccccc"/><rect x="2754.0" y="345.0" width="2.0" height="2.2" fill="#da70d6"/><rect x="2728.0" y="349.0" width="2.0" height="2.2" fill="#179fff"/><rect x="2732.0" y="353.0" width="4.0" height="2.2" fill="#9cdcfe"/><rect x="2736.0" y="353.0" width="2.0" height="2.2" fill="#cccccc"/><rect x="2740.0" y="353.0" width="2.0" height="2.2" fill="#b5cea8"/><rect x="2742.0" y="353.0" width="2.0" height="2.2" fill="#cccccc"/><rect x="2732.0" y="357.0" width="8.0" height="2.2" fill="#9cdcfe"/><rect x="2740.0" y="357.0" width="2.0" height="2.2" fill="#cccccc"/><rect x="2744.0" y="357.0" width="10.0" height="2.2" fill="#ce9178"/><rect x="2754.0" y="357.0" width="2.0" height="2.2" fill="#cccccc"/><rect x="2732.0" y="361.0" width="6.0" height="2.2" fill="#9cdcfe"/><rect x="2738.0" y="361.0" width="2.0" height="2.2" fill="#cccccc"/><rect x="2742.0" y="361.0" width="4.0" height="2.2" fill="#b5cea8"/><rect x="2728.0" y="365.0" width="2.0" height="2.2" fill="#179fff"/><rect x="2730.0" y="365.0" width="2.0" height="2.2" fill="#cccccc"/><rect x="2728.0" y="369.0" width="2.0" height="2.2" fill="#179fff"/><rect x="2732.0" y="373.0" width="4.0" height="2.2" fill="#9cdcfe"/><rect x="2736.0" y="373.0" width="2.0" height="2.2" fill="#cccccc"/><rect x="2740.0" y="373.0" width="2.0" height="2.2" fill="#b5cea8"/><rect x="2742.0" y="373.0" width="2.0" height="2.2" fill="#cccccc"/><rect x="2732.0" y="377.0" width="8.0" height="2.2" fill="#9cdcfe"/><rect x="2740.0" y="377.0" width="2.0" height="2.2" fill="#cccccc"/><rect x="2744.0" y="377.0" width="8.0" height="2.2" fill="#ce9178"/><rect x="2752.0" y="377.0" width="2.0" height="2.2" fill="#cccccc"/><rect x="2732.0" y="381.0" width="6.0" height="2.2" fill="#9cdcfe"/><rect x="2738.0" y="381.0" width="2.0" height="2.2" fill="#cccccc"/><rect x="2742.0" y="381.0" width="4.0" height="2.2" fill="#b5cea8"/><rect x="2728.0" y="385.0" width="2.0" height="2.2" fill="#179fff"/><rect x="2724.0" y="389.0" width="2.0" height="2.2" fill="#da70d6"/><rect x="2720.0" y="393.0" width="2.0" height="2.2" fill="#ffd700"/><rect x="2720.0" y="401.0" width="4.0" height="2.2" fill="#6a9955"/><rect x="2726.0" y="401.0" width="18.0" height="2.2" fill="#6a9955"/><rect x="2746.0" y="401.0" width="24.0" height="2.2" fill="#6a9955"/><rect x="2772.0" y="401.0" width="4.0" height="2.2" fill="#6a9955"/><rect x="2778.0" y="401.0" width="76.0" height="2.2" fill="#6a9955"/><rect x="2720.0" y="409.0" width="4.0" height="2.2" fill="#6a9955"/><rect x="2726.0" y="409.0" width="16.0" height="2.2" fill="#6a9955"/><rect x="2744.0" y="409.0" width="4.0" height="2.2" fill="#6a9955"/><rect x="2750.0" y="409.0" width="8.0" height="2.2" fill="#6a9955"/><rect x="2760.0" y="409.0" width="46.0" height="2.2" fill="#6a9955"/><rect x="2720.0" y="413.0" width="4.0" height="2.2" fill="#6a9955"/><rect x="2726.0" y="413.0" width="18.0" height="2.2" fill="#6a9955"/><rect x="2746.0" y="413.0" width="26.0" height="2.2" fill="#6a9955"/><rect x="2774.0" y="413.0" width="4.0" height="2.2" fill="#6a9955"/><rect x="2780.0" y="413.0" width="76.0" height="2.2" fill="#6a9955"/><rect x="2720.0" y="417.0" width="4.0" height="2.2" fill="#6a9955"/><rect x="2726.0" y="417.0" width="16.0" height="2.2" fill="#6a9955"/><rect x="2744.0" y="417.0" width="4.0" height="2.2" fill="#6a9955"/><rect x="2750.0" y="417.0" width="8.0" height="2.2" fill="#6a9955"/><rect x="2760.0" y="417.0" width="30.0" height="2.2" fill="#6a9955"/></svg>
<div class="abs" style="left:2952px;top:260px;width:2px;height:1100px;background:#2a2a2a;"></div>
<div class="abs" style="left:2954px;top:678px;width:26px;height:4px;background:#a0a0a0;"></div>
<!-- parts_editor2 -->
<div class="abs" style="left:722px;top:1360px;width:2258px;height:488px;background:#1f1f1f;"></div>
<div class="abs" style="left:722px;top:1360px;width:2258px;height:70px;background:#181818;"></div>
<div class="abs" style="left:722px;top:1360px;width:2258px;height:2px;background:#2b2b2b;"></div>
<div class="abs" style="left:722px;top:1428px;width:2258px;height:2px;background:#2b2b2b;"></div>
<div class="abs" style="left:722px;top:1362px;width:370px;height:68px;background:#1f1f1f;"></div>
<div class="abs" style="left:722px;top:1360px;width:370px;height:2px;background:#0078d4;"></div>
<div class="abs" style="left:1092px;top:1362px;width:2px;height:68px;background:#2b2b2b;"></div>
<svg style="left:744.5px;top:1379.0px" width="32" height="32" viewBox="0 0 32 32" ><g fill="none" stroke="#e37933" stroke-width="2.5" stroke-linecap="butt" stroke-linejoin="miter"><path d="M13 9.2 L7.2 16 L13 22.8 M19 9.2 L24.8 16 L19 22.8"/></g></svg>
<div class="t ui" style="left:786px;top:1374px;color:#fff">app.component.html</div>
<svg style="left:1048.0px;top:1380.0px" width="32" height="32" viewBox="0 0 16 16" ><g fill="none" stroke="#fff" stroke-width="0.95" stroke-linecap="butt" stroke-linejoin="round"><path d="M4.1 4.1 L11.9 11.9 M11.9 4.1 L4.1 11.9"/></g></svg>
<svg style="left:2762.0px;top:1380.0px" width="32" height="32" viewBox="0 0 16 16" ><g fill="none" stroke="#ccc" stroke-width="1.1" stroke-linecap="round" stroke-linejoin="miter"><path d="M3.6 2 L13 8 L3.6 14z"/></g></svg>
<svg style="left:2814.0px;top:1380.0px" width="32" height="32" viewBox="0 0 16 16" ><path fill="#ccc" d="M1.4 2.2 H15 V8 H13.9 V4.6 H9 V13.6 H1.4z M2.5 4.6 V12.5 H7.9 V4.6z"/><g fill="none" stroke="#59a8f0" stroke-width="1.3" stroke-linecap="round" stroke-linejoin="round"><circle cx="12.6" cy="10.6" r="2"/><path d="M11.2 12.1 L8.6 14.8"/></g></svg>
<svg style="left:2867.0px;top:1379.0px" width="32" height="32" viewBox="0 0 16 16" ><g fill="none" stroke="#ccc" stroke-width="1.1" stroke-linecap="round" stroke-linejoin="round"><rect x="1.5" y="1.7" width="13" height="12.6" rx="1.2"/><path d="M8 1.7 V14.3"/></g></svg>
<svg style="left:2918.0px;top:1380.0px" width="32" height="32" viewBox="0 0 16 16" ><g fill="#ccc"><circle cx="3.5" cy="8" r="1.05"/><circle cx="8" cy="8" r="1.05"/><circle cx="12.5" cy="8" r="1.05"/></g></svg>
<div class="t ui" style="left:754px;top:1430px;color:#a9a9a9">src</div>
<svg style="left:792.0px;top:1436.0px" width="32" height="32" viewBox="0 0 16 16" ><g fill="none" stroke="#a9a9a9" stroke-width="0.9" stroke-linecap="round" stroke-linejoin="round"><path d="M6.1 3.8 L10.3 8 L6.1 12.2"/></g></svg>
<div class="t ui" style="left:823px;top:1430px;color:#a9a9a9">app</div>
<svg style="left:870.0px;top:1436.0px" width="32" height="32" viewBox="0 0 16 16" ><g fill="none" stroke="#a9a9a9" stroke-width="0.9" stroke-linecap="round" stroke-linejoin="round"><path d="M6.1 3.8 L10.3 8 L6.1 12.2"/></g></svg>
<svg style="left:904.5px;top:1435.0px" width="32" height="32" viewBox="0 0 32 32" ><g fill="none" stroke="#e37933" stroke-width="2.5" stroke-linecap="butt" stroke-linejoin="miter"><path d="M13 9.2 L7.2 16 L13 22.8 M19 9.2 L24.8 16 L19 22.8"/></g></svg>
<div class="t ui" style="left:945px;top:1430px;color:#a9a9a9">app.component.html</div>
<svg style="left:1196.0px;top:1436.0px" width="32" height="32" viewBox="0 0 16 16" ><g fill="none" stroke="#a9a9a9" stroke-width="0.9" stroke-linecap="round" stroke-linejoin="round"><path d="M6.1 3.8 L10.3 8 L6.1 12.2"/></g></svg>
<svg style="left:1227.0px;top:1436.0px" width="32" height="32" viewBox="0 0 16 16" ><g fill="none" stroke="#75beff" stroke-width="1.1" stroke-linecap="round" stroke-linejoin="round"><path d="M1.4 5.6 L10.4 2.2 L14.6 4.6 V10.6 L5.8 14 L1.4 11.4z M1.4 5.6 L5.8 8 L14.6 4.6 M5.8 8 V14"/></g></svg>
<div class="t ui" style="left:1265px;top:1430px;color:#a9a9a9">div</div>
<div class="t " style="left:854.6px;top:1474px;height:30px;line-height:30px;font-size:21.6px;letter-spacing:.05px;color:#999;">Go to component</div>
<div class="abs" style="left:854px;top:1504px;width:1858px;height:36px;border:4px solid #282828;border-right:0"></div>
<div class="num" style="left:721px;top:1504px;color:#ccc">1</div>
<div class="code" style="left:854.6px;top:1504px"><span class="tg">&lt;</span><span class="kw">div</span><span class="pu"> </span><span class="pr">[hidden]</span><span class="pu">=</span><span class="st">"</span><span class="pr">list</span><span class="pu">.</span><span class="pr">length</span><span class="pu"> &gt; </span><span class="nu">0</span><span class="st">"</span><span class="tg">&gt;</span><span class="pu">no more content</span><span class="tg">&lt;/</span><span class="kw">div</span><span class="tg">&gt;</span></div>
<div class="abs" style="left:1619px;top:1505px;width:4px;height:34px;background:#aeafad;"></div>
<svg style="left:0;top:0" width="3092" height="2278" opacity="0.38"><rect x="2720.0" y="1475.0" width="2.0" height="2.2" fill="#808080"/><rect x="2722.0" y="1475.0" width="6.0" height="2.2" fill="#569cd6"/><rect x="2730.0" y="1475.0" width="16.0" height="2.2" fill="#9cdcfe"/><rect x="2746.0" y="1475.0" width="2.0" height="2.2" fill="#cccccc"/><rect x="2748.0" y="1475.0" width="2.0" height="2.2" fill="#ce9178"/><rect x="2750.0" y="1475.0" width="8.0" height="2.2" fill="#9cdcfe"/><rect x="2758.0" y="1475.0" width="2.0" height="2.2" fill="#cccccc"/><rect x="2760.0" y="1475.0" width="12.0" height="2.2" fill="#9cdcfe"/><rect x="2774.0" y="1475.0" width="2.0" height="2.2" fill="#cccccc"/><rect x="2778.0" y="1475.0" width="2.0" height="2.2" fill="#b5cea8"/><rect x="2780.0" y="1475.0" width="2.0" height="2.2" fill="#ce9178"/><rect x="2782.0" y="1475.0" width="2.0" height="2.2" fill="#808080"/><rect x="2784.0" y="1475.0" width="4.0" height="2.2" fill="#cccccc"/><rect x="2790.0" y="1475.0" width="8.0" height="2.2" fill="#cccccc"/><rect x="2800.0" y="1475.0" width="14.0" height="2.2" fill="#cccccc"/><rect x="2814.0" y="1475.0" width="4.0" height="2.2" fill="#808080"/><rect x="2818.0" y="1475.0" width="6.0" height="2.2" fill="#569cd6"/><rect x="2824.0" y="1475.0" width="2.0" height="2.2" fill="#808080"/></svg>
<div class="abs" style="left:2952px;top:1474px;width:28px;height:346px;background:#3d3d3d;"></div>
<div class="abs" style="left:2952px;top:1820px;width:2px;height:28px;background:#2a2a2a;"></div>
<div class="abs" style="left:2954px;top:1499px;width:26px;height:5px;background:#8f8f8f;"></div>
<!-- parts_panel -->
<div class="abs" style="left:722px;top:1848px;width:2258px;height:238px;background:#181818;"></div>
<div class="abs" style="left:722px;top:1848px;width:2258px;height:2px;background:#2b2b2b;"></div>
<div class="t " style="left:762px;top:1862px;font-size:22px;letter-spacing:-.17px;color:#9d9d9d">PROBLEMS</div>
<div class="t " style="left:930px;top:1862px;font-size:22px;letter-spacing:-.17px;color:#9d9d9d">OUTPUT</div>
<div class="t " style="left:1070px;top:1862px;font-size:22px;letter-spacing:-.17px;color:#9d9d9d">DEBUG CONSOLE</div>
<div class="t " style="left:1308px;top:1862px;font-size:22px;letter-spacing:-.17px;color:#9d9d9d">COMMENTS</div>
<div class="t " style="left:1485px;top:1862px;font-size:22px;letter-spacing:-.17px;color:#9d9d9d">PORTS</div>
<div class="t " style="left:1607px;top:1862px;font-size:22px;letter-spacing:-.17px;color:#ccc">TERMINAL</div>
<div class="abs" style="left:1603px;top:1904px;width:119px;height:2px;background:#0078d4;"></div>
<svg style="left:2735.0px;top:1868.0px" width="32" height="32" viewBox="0 0 16 16" ><g fill="none" stroke="#ccc" stroke-width="1.15" stroke-linecap="butt" stroke-linejoin="round"><path d="M8 1.6 V14.4 M1.6 8 H14.4"/></g></svg>
<svg style="left:2774.0px;top:1876.0px" width="20" height="20" viewBox="0 0 16 16" ><g fill="none" stroke="#ccc" stroke-width="1.5" stroke-linecap="round" stroke-linejoin="round"><path d="M2.4 5.4 L8 11 L13.6 5.4"/></g></svg>
<svg style="left:2814.0px;top:1869.0px" width="32" height="32" viewBox="0 0 16 16" ><g fill="#ccc"><circle cx="3.5" cy="8" r="1.05"/><circle cx="8" cy="8" r="1.05"/><circle cx="12.5" cy="8" r="1.05"/></g></svg>
<svg style="left:2866.0px;top:1868.0px" width="32" height="32" viewBox="0 0 16 16" ><g fill="none" stroke="#ccc" stroke-width="1.1" stroke-linecap="round" stroke-linejoin="round"><path d="M3.2 10.2 L8 5.4 L12.8 10.2"/></g></svg>
<svg style="left:2918.0px;top:1868.0px" width="32" height="32" viewBox="0 0 16 16" ><g fill="none" stroke="#ccc" stroke-width="0.95" stroke-linecap="butt" stroke-linejoin="round"><path d="M4.1 4.1 L11.9 11.9 M11.9 4.1 L4.1 11.9"/></g></svg>
<div class="t" style="left:762px;top:1946px;height:28px;line-height:28px;font-family:'DejaVu Sans Mono','Liberation Mono',monospace;font-size:24px;letter-spacing:-.45px;color:#ccc;">Build at: <b style="color:#e5e5e5">2025-01-26T21:16:58.747Z</b> - Hash: <b style="color:#e5e5e5">b58b473721ffbc52</b> - Time: <b style="color:#e5e5e5">268</b>ms</div>
<div class="t" style="left:762px;top:2002px;height:28px;line-height:28px;font-family:'DejaVu Sans Mono','Liberation Mono',monospace;font-size:24px;letter-spacing:-.45px;color:#ccc;"><span style="color:#23d18b">✔</span> Compiled successfully.</div>
<div class="t" style="left:762px;top:2030px;height:28px;line-height:28px;font-family:'DejaVu Sans Mono','Liberation Mono',monospace;font-size:24px;letter-spacing:-.45px;color:#ccc;"><span style="color:#23d18b">✔</span> Browser application bundle generation complete.</div>
<div class="abs" style="left:2524px;top:1918px;width:28px;height:168px;background:#141414;border-left:2px solid #0b0b12;border-top:2px solid #0b0b12"></div>
<div class="abs" style="left:2526px;top:1937px;width:9px;height:12px;background:#5a5a5a;"></div>
<div class="abs" style="left:2552px;top:1918px;width:2px;height:168px;background:#2b2b2b;"></div>
<div class="abs" style="left:2554px;top:2006px;width:426px;height:44px;background:#333339;"></div>
<div class="abs" style="left:2554px;top:2006px;width:3px;height:44px;background:#0078d4;"></div>
<svg style="left:2574.0px;top:1924.0px" width="32" height="32" viewBox="0 0 16 16" ><g fill="none" stroke="#ccc" stroke-width="1.1" stroke-linecap="round" stroke-linejoin="round"><rect x="1.3" y="1.6" width="13.4" height="12.8" rx="1.3"/><path d="M4.4 5.4 L7.4 8.2 L4.4 11 M8.6 11.2 H11.6"/></g></svg>
<div class="t ui" style="left:2613px;top:1918px;">zsh</div>
<svg style="left:2574.0px;top:1968.0px" width="32" height="32" viewBox="0 0 16 16" ><g fill="none" stroke="#ccc" stroke-width="1.1" stroke-linecap="round" stroke-linejoin="round"><rect x="1.3" y="1.6" width="13.4" height="12.8" rx="1.3"/><path d="M4.4 5.4 L7.4 8.2 L4.4 11 M8.6 11.2 H11.6"/></g></svg>
<div class="t ui" style="left:2613px;top:1962px;">zsh</div>
<svg style="left:2574.0px;top:2012.0px" width="32" height="32" viewBox="0 0 16 16" ><g fill="none" stroke="#ccc" stroke-width="1.1" stroke-linecap="round" stroke-linejoin="round"><rect x="1.3" y="1.6" width="13.4" height="12.8" rx="1.3"/><path d="M4.4 5.4 L7.4 8.2 L4.4 11 M8.6 11.2 H11.6"/></g></svg>
<div class="t ui" style="left:2613px;top:2006px;">node</div>
<svg style="left:2574.0px;top:2056.0px" width="32" height="32" viewBox="0 0 16 16" ><g fill="none" stroke="#ccc" stroke-width="1.1" stroke-linecap="round" stroke-linejoin="round"><rect x="1.3" y="1.6" width="13.4" height="12.8" rx="1.3"/><path d="M4.4 5.4 L7.4 8.2 L4.4 11 M8.6 11.2 H11.6"/></g></svg>
<div class="t ui" style="left:2613px;top:2050px;">zsh</div>
<!-- parts_status -->
<div class="abs" style="left:112px;top:2086px;width:2868px;height:44px;background:#181818;"></div>
<div class="abs" style="left:112px;top:2086px;width:2868px;height:2px;background:#2b2b2b;"></div>
<div class="abs" style="left:112px;top:2088px;width:68px;height:42px;background:#0078d4;"></div>
<svg style="left:130.0px;top:2092.0px" width="32" height="32" viewBox="0 0 16 16" ><g fill="none" stroke="#fff" stroke-width="0.95" stroke-linecap="butt" stroke-linejoin="miter"><path d="M4.2 8 L7.2 11 L4.2 14 M11.8 2.4 L8.8 5.4 L11.8 8.4"/></g></svg>
<svg style="left:196.5px;top:2094.5px" width="29" height="29" viewBox="0 0 16 16" ><g fill="none" stroke="#ccc" stroke-width="1.1" stroke-linecap="round" stroke-linejoin="miter"><path d="M2 2.4 V13.6 L9.6 8z M6.6 3.2 L13.8 8 L6.6 12.8"/></g></svg>
<div class="t " style="left:238px;top:2087px;font-size:24px;letter-spacing:.5px;color:#ccc">Run Testcases</div>
<svg style="left:431.5px;top:2094.5px" width="29" height="29" viewBox="0 0 16 16" ><g fill="none" stroke="#ccc" stroke-width="1.05" stroke-linecap="round" stroke-linejoin="round"><circle cx="8" cy="8" r="6"/><path d="M5.7 5.7 L10.3 10.3 M10.3 5.7 L5.7 10.3"/></g></svg>
<div class="t " style="left:468px;top:2087px;font-size:24px;letter-spacing:.5px;color:#ccc">0</div>
<svg style="left:489.5px;top:2094.5px" width="29" height="29" viewBox="0 0 16 16" ><g fill="none" stroke="#ccc" stroke-width="1.05" stroke-linecap="round" stroke-linejoin="round"><path d="M8 2.2 L14 13.4 H2z"/><path d="M8 6.4 V10"/></g><circle cx="8" cy="11.7" r=".7" fill="#ccc"/></svg>
<div class="t " style="left:525px;top:2087px;font-size:24px;letter-spacing:.5px;color:#ccc">0</div>
<svg style="left:571.5px;top:2094.5px" width="29" height="29" viewBox="0 0 16 16" ><g fill="none" stroke="#ccc" stroke-width="1.0" stroke-linecap="round" stroke-linejoin="round"><path d="M8 5.4 L4.8 14 M8 5.4 L11.2 14 M5.8 11.4 H10.2"/><circle cx="8" cy="4.8" r="1.2"/><path d="M5.2 2.4 C4.2 3.8 4.2 5.8 5.2 7.2 M10.8 2.4 C11.8 3.8 11.8 5.8 10.8 7.2 M3.4 1.2 C1.8 3.4 1.8 6.2 3.4 8.4 M12.6 1.2 C14.2 3.4 14.2 6.2 12.6 8.4"/></g></svg>
<div class="t " style="left:607px;top:2087px;font-size:24px;letter-spacing:.5px;color:#ccc">0</div>
<div class="t " style="left:654px;top:2087px;font-size:24px;letter-spacing:.5px;color:#ccc;letter-spacing:.9px">-- INSERT --</div>
<div class="t " style="left:2285px;top:2087px;font-size:24px;letter-spacing:.5px;color:#ccc">Ln 1, Col 54</div>
<div class="t " style="left:2455px;top:2087px;font-size:24px;letter-spacing:.5px;color:#ccc">Spaces: 4</div>
<div class="t " style="left:2599px;top:2087px;font-size:24px;letter-spacing:.5px;color:#ccc">UTF-8</div>
<div class="t " style="left:2704px;top:2087px;font-size:24px;letter-spacing:.5px;color:#ccc">LF</div>
<div class="t " style="left:2763px;top:2087px;font-size:24px;letter-spacing:.5px;color:#ccc">HTML</div>
<svg style="left:2861.0px;top:2094.0px" width="30" height="30" viewBox="0 0 16 16" ><g fill="#ccc"><rect x="1.55" y=".75" width="6.65" height="6.9" rx="2.9"/><rect x="7.8" y=".75" width="6.65" height="6.9" rx="2.9"/><ellipse cx="8" cy="10.5" rx="8.1" ry="4.55"/><rect x="2" y="4" width="12" height="6"/></g><g fill="#181818"><rect x="3.15" y="2.55" width="3.85" height="3.7" rx="1.6"/><rect x="9.05" y="2.55" width="3.85" height="3.7" rx="1.6"/><path d="M3.15 7.45 H7.2 L8 6.8 L8.8 7.45 H12.9 V11.4 Q8 14 3.15 11.4z"/></g><g fill="#ccc"><rect x="5.5" y="8.9" width="1.45" height="3.1" rx=".7"/><rect x="9.05" y="8.9" width="1.45" height="3.1" rx=".7"/></g></svg>
<svg style="left:2920.0px;top:2092.0px" width="32" height="32" viewBox="0 0 16 16" ><g fill="none" stroke="#ccc" stroke-width="1.1" stroke-linecap="round" stroke-linejoin="round"><path d="M3 11.4 C4 10.2 4.2 9 4.2 7 C4.2 4.4 5.8 2.6 8 2.6 C8.6 2.6 9.2 2.7 9.7 3 M11.8 7.2 C11.8 9.2 12 10.2 13 11.4 H3 M6.6 13.2 C6.9 14.2 9.1 14.2 9.4 13.2"/></g><circle cx="11.9" cy="3.6" r="2.1" fill="#ccc"/></svg>
</div><div id="rim"></div></div>
</body></html>
